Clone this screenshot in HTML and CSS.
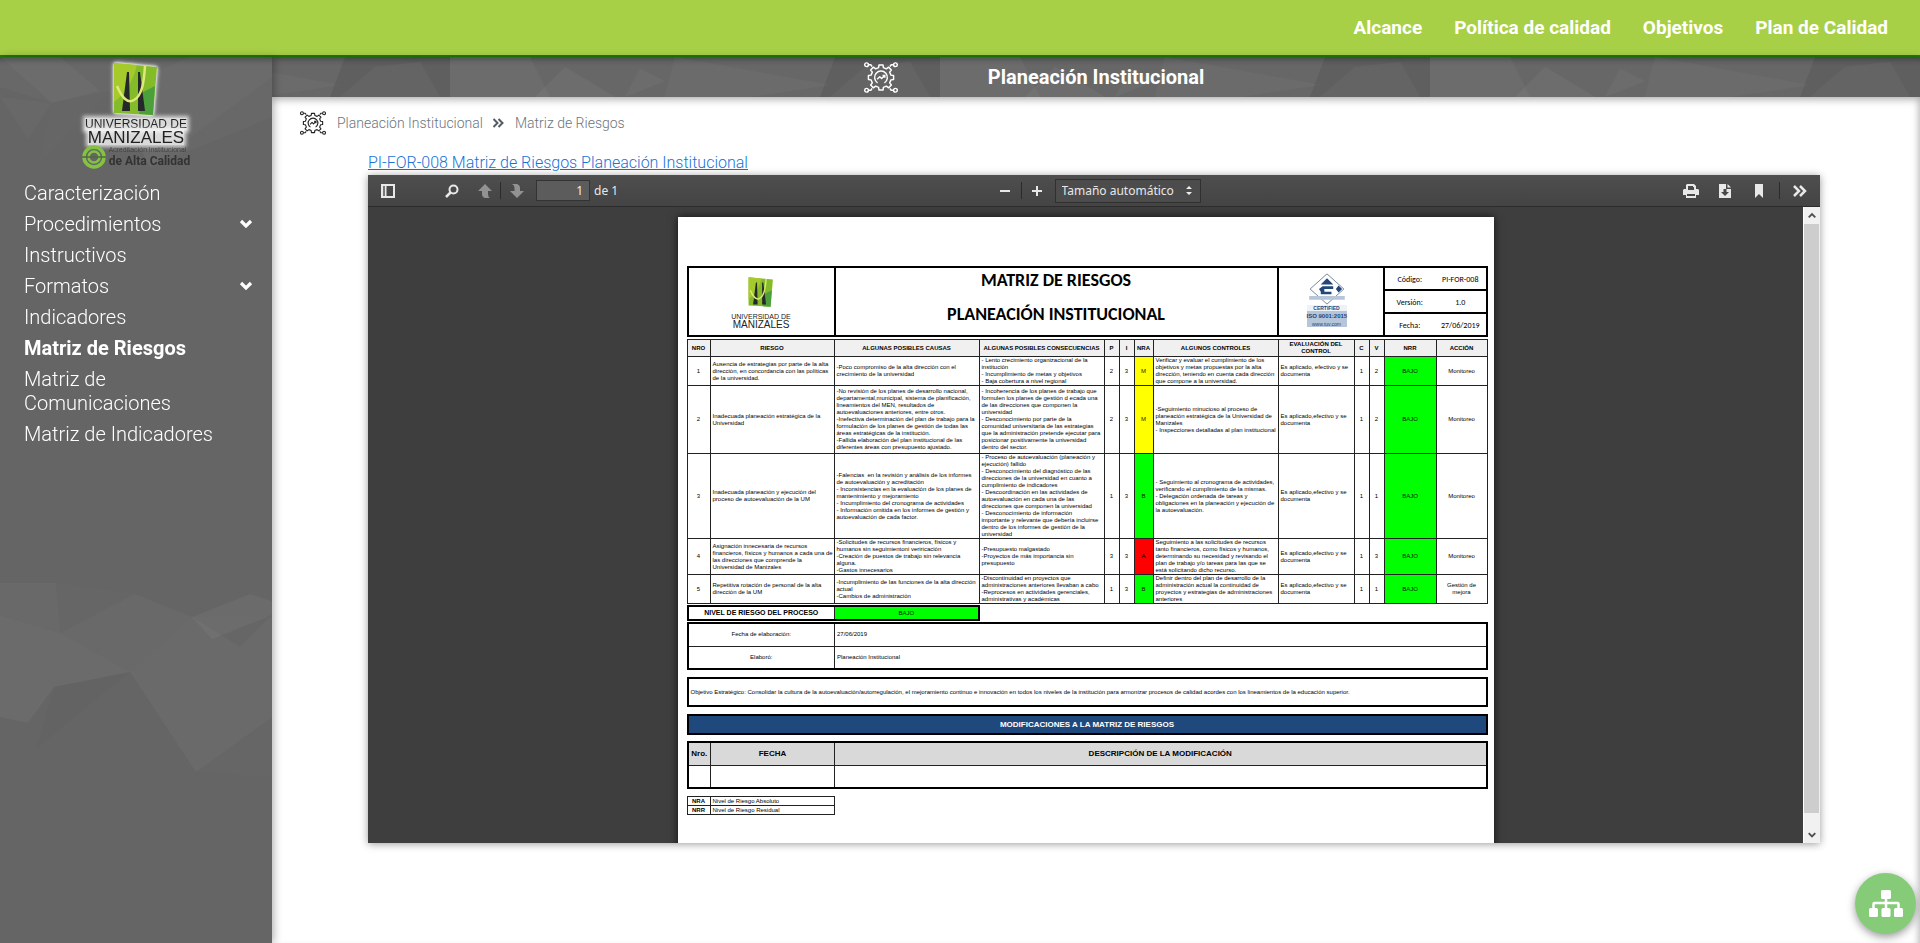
FILE: index.html
```html
<!DOCTYPE html>
<html lang="es">
<head>
<meta charset="utf-8">
<title>Matriz de Riesgos - Planeación Institucional</title>
<link rel="stylesheet" href="styles.css">
</head>
<body>
<svg class="defs" aria-hidden="true">
  <symbol id="gear" viewBox="0 0 40 36">
    <g transform="translate(20 18)" fill="none" stroke="currentColor" stroke-width="1.7" stroke-linejoin="round">
      <path d="M11.700-2.800 14.800-2.400 14.800 2.400 11.700 2.800 10.200 6.300 12.200 8.900 8.900 12.200 6.300 10.200 2.800 11.700 2.400 14.800-2.400 14.800-2.800 11.700-6.300 10.200-8.900 12.200-12.200 8.900-10.200 6.300-11.700 2.800-14.800 2.400-14.800-2.400-11.700-2.800-10.200-6.300-12.200-8.900-8.900-12.200-6.300-10.200-2.800-11.700-2.400-14.800 2.400-14.800 2.800-11.700 6.300-10.200 8.900-12.200 12.200-8.900 10.200-6.300Z"/>
      <path d="M-4 6.300A7.500 7.500 0 1 1 4 6.300M-4.500 2-1.500-1 .8 1.300 4.500-2.500M1.800-2.500H4.500V.2"/>
      <circle cx="-17" cy="-15" r="2.200"/><circle cx="17" cy="-15" r="2.200"/>
      <circle cx="-17" cy="15" r="2.200"/><circle cx="17" cy="15" r="2.200"/>
      <path d="M-14.800-15H-12L-10.500-13M14.800-15H12L10.500-13M-14.800 15H-12L-10.500 13M14.800 15H12L10.500 13"/>
    </g>
  </symbol>
  <symbol id="chevron" viewBox="0 0 14 10"><path d="M2 2 7 7 12 2" fill="none" stroke="currentColor" stroke-width="3.200"/></symbol>
  <symbol id="tower" viewBox="0 0 46 54">
    <path d="M1 1 44 5 40 53 1 51Z" fill="#84bb28"/>
    <path d="M1 1 24 3C20 20 12 32 1 40Z" fill="#a6c92c"/>
    <path d="M30 30 42 24 40 53 26 52Z" fill="#4ba03c"/>
    <path d="M14 10H16L17 49H9Z" fill="#25282a"/>
    <path d="M25 10H27L32 49H25Z" fill="#25282a"/>
    <path d="M4 24C9 36 15 42 21 38 29 34 31 20 32 4" fill="none" stroke="#dfe978" stroke-width="2.500"/>
  </symbol>
</svg>

<header class="topbar">
  <nav class="topnav">
    <a href="#alcance">Alcance</a>
    <a href="#politica">Política de calidad</a>
    <a href="#objetivos">Objetivos</a>
    <a href="#plan">Plan de Calidad</a>
  </nav>
</header>

<div class="layout">
  <aside class="sidebar">
    <svg class="facets" viewBox="0 0 272 886" preserveAspectRatio="xMidYMin slice" aria-hidden="true">
      <g opacity=".75">
        <g fill="#fff">
        <path d="M0 0H272V60L150 110 110 34 52 46Z" opacity=".035"/>
        <path d="M0 0H60L100 34 52 46 0 30Z" opacity=".03"/>
        <path d="M0 40 52 46 28 82Z" opacity=".035"/>
        <path d="M52 46 110 34 38 108Z" opacity=".02"/>
        <path d="M110 34 190 0H272V20L150 110Z" opacity=".025"/>
        <path d="M0 526H56L60 576 0 558Z" opacity=".04"/>
        <path d="M0 558 60 576 130 615 54 630 28 666 0 660Z" opacity=".055"/>
        <path d="M60 576 135 537 192 560 130 615Z" opacity=".045"/>
        <path d="M60 576 56 526 135 537Z" opacity=".02"/>
        <path d="M130 615 192 560 240 590 272 558V660L196 715Z" opacity=".035"/>
        <path d="M192 560 250 537 272 544V558L212 582Z" opacity=".055"/>
        <path d="M130 615 196 715 272 720V560L192 560Z" opacity=".02"/>
        </g>
        <path d="M130 615 36 692 54 630Z" opacity=".02"/>
      </g>
    </svg>
    <div class="brand">
      <svg class="brand-mark"><use href="#tower"/></svg>
      <span class="brand-top">UNIVERSIDAD DE</span>
      <span class="brand-name">MANIZALES</span>
      <div class="seal">
        <svg class="seal-icon" viewBox="0 0 24 24"><g fill="none" stroke="#84c341"><circle cx="12" cy="12" r="10" stroke-width="3.500"/><circle cx="12" cy="12" r="5.500" stroke-width="2.500"/><path d="M0 12H24" stroke="#4f6b3c" stroke-width="1.500"/></g></svg>
        <div class="seal-text"><span>Acreditación Institucional</span><b>de Alta Calidad</b></div>
      </div>
    </div>
    <nav class="menu">
      <a href="#caracterizacion">Caracterización</a>
      <a href="#procedimientos">Procedimientos<svg class="chev"><use href="#chevron"/></svg></a>
      <a href="#instructivos">Instructivos</a>
      <a href="#formatos">Formatos<svg class="chev"><use href="#chevron"/></svg></a>
      <a href="#indicadores">Indicadores</a>
      <a class="active" href="#riesgos">Matriz de Riesgos</a>
      <a href="#comunicaciones">Matriz de<br>Comunicaciones</a>
      <a href="#matriz-indicadores">Matriz de Indicadores</a>
    </nav>
  </aside>

  <main class="main">
    <div class="titlebar">
      <svg class="poly" aria-hidden="true">
        <defs><pattern id="facet" x="178" width="490" height="40" patternUnits="userSpaceOnUse">
          <g fill="#fff"><path d="M0 0H490V40H0Z" opacity=".04"/><path d="M0 0H80L100 40H0Z" opacity=".03"/><path d="M115 10 165 40H85Z" opacity=".04"/><path d="M190 12 215 24 175 40Z" opacity=".03"/><path d="M225 0 380 28 300 40H215Z" opacity=".025"/></g>
          <path d="M385 0H490V40H370Z" opacity=".08"/><path d="M415 10 460 5 480 40H380Z" fill="#fff" opacity=".03"/>
        </pattern></defs>
        <rect width="100%" height="40" fill="url(#facet)"/>
      </svg>
      <svg class="title-icon"><use href="#gear"/></svg>
      <h1>Planeación Institucional</h1>
    </div>
    <div class="crumbs">
      <svg class="crumb-icon"><use href="#gear"/></svg>
      <a href="#inicio">Planeación Institucional</a>
      <svg class="crumb-sep" viewBox="0 0 12 10"><path d="M1.500 1 5.500 5 1.500 9M6.500 1 10.500 5 6.500 9" fill="none" stroke="currentColor" stroke-width="2"/></svg>
      <span>Matriz de Riesgos</span>
    </div>
    <section class="content">
      <a class="doc-link" href="#pi-for-008">PI-FOR-008 Matriz de Riesgos Planeación Institucional</a>
      <div class="viewer">
        <div class="toolbar">
          <div class="tools">
            <button class="tool" aria-label="Panel lateral"><svg viewBox="0 0 16 16"><path fill-rule="evenodd" d="M1 1H15V15H1ZM6.500 3V13H13V3Z"/><path d="M3 3H5V13H3Z" fill="#777"/></svg></button>
            <button class="tool find" aria-label="Buscar"><svg viewBox="0 0 16 16"><g fill="none" stroke="currentColor"><circle cx="9.500" cy="6.500" r="4" stroke-width="2"/><path d="M6.500 9.500 2 14" stroke-width="2.500"/></g></svg></button>
            <button class="tool dim" aria-label="Página anterior"><svg viewBox="0 0 16 16"><path d="M8 1 15 8H11V11Q11 14 13 15H8Q5 14 5 11V8H1Z"/></svg></button>
            <i class="rule"></i>
            <button class="tool dim" aria-label="Página siguiente"><svg viewBox="0 0 16 16"><path d="M8 15 1 8H5.500V5Q5.500 2 3 1H8Q11 2 11 5V8H15Z"/></svg></button>
            <input class="page-no" type="text" value="1" aria-label="Página">
            <span>de 1</span>
          </div>
          <div class="tools">
            <button class="tool" aria-label="Reducir"><svg viewBox="0 0 16 16"><path d="M3 7H13V9H3Z"/></svg></button>
            <i class="rule"></i>
            <button class="tool plus" aria-label="Aumentar"><svg viewBox="0 0 16 16"><path d="M3 7H7V3H9V7H13V9H9V13H7V9H3Z"/></svg></button>
            <span class="zoom"><select aria-label="Tamaño"><option>Tamaño automático</option></select><svg viewBox="0 0 8 10"><path d="M4 0 7 3H1ZM4 9 1 6H7Z"/></svg></span>
          </div>
          <div class="tools right">
            <button class="tool" aria-label="Imprimir"><svg viewBox="0 0 16 16"><path fill-rule="evenodd" d="M3 6V2L4 1H11L13 3V6H15L16 7V12H13V15H3V12H0V7L1 6ZM5 3V7H11V4H10V3ZM4 11V13H12V11Z"/></svg></button>
            <button class="tool" aria-label="Descargar"><svg viewBox="0 0 16 16"><path fill-rule="evenodd" d="M2 1H9V6H14V15H2ZM6.500 6V9H4L8 13 12 9H9.500V6Z"/><path d="M10.500 1 14 4.500H10.500Z"/></svg></button>
            <button class="tool" aria-label="Marcador"><svg viewBox="0 0 16 16"><path d="M4 1H12V15L8 11 4 15Z"/></svg></button>
            <i class="rule"></i>
            <button class="tool" aria-label="Herramientas"><svg viewBox="0 0 16 16"><path d="M2 3 7 8 2 13M8 3 13 8 8 13" fill="none" stroke="currentColor" stroke-width="2.500"/></svg></button>
          </div>
        </div>
        <div class="viewport">
          <div class="pages">
            <article class="sheet">
              <table class="doc-head">
                <colgroup><col class="w147"><col><col class="w106"><col class="w103"></colgroup>
                <tr>
                  <td rowspan="3"><div class="doc-logo"><svg><use href="#tower"/></svg><span>UNIVERSIDAD DE</span><b>MANIZALES</b></div></td>
                  <td rowspan="3" class="doc-title"><div><span>MATRIZ DE RIESGOS</span><span>PLANEACIÓN INSTITUCIONAL</span></div></td>
                  <td rowspan="3"><div class="iso">
                    <svg viewBox="0 0 40 36"><path d="M20 1 39 18 20 35 1 18Z" fill="#fff" stroke="#657996"/><path d="M20 6 27 13H13Z" fill="#234678"/><path d="M33 14 37 18 33 22 30 18ZM11 18 15 15H27V18H17V21H25V24H13V21Z" fill="#234678"/><path d="M0 26H40V30H0Z" fill="#b5c5da"/></svg>
                    <span class="iso-cert">CERTIFIED</span><b>ISO 9001:2015</b><span class="iso-small">www.tuv.com</span></div></td>
                  <td class="meta"><div><span>Código:</span><span>PI-FOR-008</span></div></td>
                </tr>
                <tr><td class="meta"><div><span>Versión:</span><span>1.0</span></div></td></tr>
                <tr><td class="meta"><div><span>Fecha:</span><span>27/06/2019</span></div></td></tr>
              </table>

              <table class="risks">
                <colgroup><col class="w23"><col class="w124"><col class="w145"><col class="w125"><col class="w15"><col class="w15"><col class="w19"><col class="w125"><col class="w76"><col class="w15"><col class="w15"><col class="w52"><col></colgroup>
                <thead><tr><th>NRO</th><th>RIESGO</th><th>ALGUNAS POSIBLES CAUSAS</th><th>ALGUNAS POSIBLES CONSECUENCIAS</th><th>P</th><th>I</th><th>NRA</th><th>ALGUNOS CONTROLES</th><th>EVALUACIÓN DEL<br>CONTROL</th><th>C</th><th>V</th><th>NRR</th><th>ACCIÓN</th></tr></thead>
                <tbody>
                <tr><td>1</td><td class="l">Ausencia de estrategias por parte de la alta<br>dirección, en concordancia con las políticas<br>de la universidad.</td><td class="l">-Poco compromiso de la alta dirección con el<br>crecimiento de la universidad</td><td class="l">- Lento crecimiento organizacional de la<br>institución<br>- Incumplimiento de metas y objetivos<br>- Baja cobertura a nivel regional</td><td>2</td><td>3</td><td class="yellow">M</td><td class="l">Verificar y evaluar el cumplimiento de los<br>objetivos y metas propuestas por la alta<br>dirección, teniendo en cuenta cada dirección<br>que compone a la universidad.</td><td class="l">Es aplicado, efectivo y se<br>documenta</td><td>1</td><td>2</td><td class="green">BAJO</td><td>Monitoreo</td></tr>
                <tr class="tall"><td>2</td><td class="l">Inadecuada planeación estratégica de la<br>Universidad</td><td class="l">-No revisión de los planes de desarrollo nacional,<br>departamental,municipal, sistema de planificación,<br>lineamientos del MEN, resultados de<br>autoevaluaciones anteriores, entre otros.<br>-Inefectiva determinación del plan de trabajo para la<br>formulación de los planes de gestión de todas las<br>áreas estratégicas de la institución.<br>-Fallida elaboración del plan institucional de las<br>diferentes áreas con presupuesto ajustado.</td><td class="l">- Incoherencia de los planes de trabajo que<br>formulen los planes de gestión d ecada una<br>de las direcciones que componen la<br>universidad<br>- Desconocimiento por parte de la<br>comunidad universitaria de las estrategias<br>que la administración pretende ejecutar para<br>posicionar positivamente la universidad<br>dentro del sector.</td><td>2</td><td>3</td><td class="yellow">M</td><td class="l">-Seguimiento minucioso al proceso de<br>planeación estratégica de la Universidad de<br>Manizales<br>- Inspecciones detalladas al plan institucional</td><td class="l">Es aplicado,efectivo y se<br>documenta</td><td>1</td><td>2</td><td class="green">BAJO</td><td>Monitoreo</td></tr>
                <tr><td>3</td><td class="l">Inadecuada planeación y ejecución del<br>proceso de autoevaluación de la UM</td><td class="l">-Falencias &nbsp;en la revisión y análisis de los informes<br>de autoevaluación y acreditación<br>- Inconsistencias en la evaluación de los planes de<br>mantenimiento y mejoramiento<br>- Incumplimiento del cronograma de actividades<br>- Información omitida en los informes de gestión y<br>autoevaluación de cada factor.</td><td class="l">- Proceso de autoevaluación (planeación y<br>ejecución) fallido<br>- Desconocimiento del diagnóstico de las<br>direcciones de la universidad en cuanto a<br>cumplimiento de indicadores<br>- Descoordinación en las actividades de<br>autoevaluación en cada una de las<br>direcciones que componen la universidad<br>- Desconocimiento de información<br>importante y relevante que debería incluirse<br>dentro de los informes de gestión de la<br>universidad</td><td>1</td><td>3</td><td class="green">B</td><td class="l">- Seguimiento al cronograma de actividades,<br>verificando el cumplimiento de la mismas.<br>- Delegación ordenada de tareas y<br>obligaciones en la planeación y ejecución de<br>la autoevaluación.</td><td class="l">Es aplicado,efectivo y se<br>documenta</td><td>1</td><td>1</td><td class="green">BAJO</td><td>Monitoreo</td></tr>
                <tr><td>4</td><td class="l">Asignación innecesaria de recursos<br>financieros, físicos y humanos a cada una de<br>las direcciones que comprende la<br>Universidad de Manizales</td><td class="l">-Solicitudes de recursos financieros, físicos y<br>humanos sin seguimientoni veriricación<br>-Creación de puestos de trabajo sin relevancia<br>alguna.<br>-Gastos innecesarios</td><td class="l">-Presupuesto malgastado<br>-Proyectos de más importancia sin<br>presupuesto</td><td>3</td><td>3</td><td class="red">A</td><td class="l">Seguimiento a las solicitudes de recursos<br>tanto financieros, como físicos y humanos,<br>determinando su necesidad y revisando el<br>plan de trabajo y/o tareas para las que se<br>está solicitando dicho recurso.</td><td class="l">Es aplicado,efectivo y se<br>documenta</td><td>1</td><td>3</td><td class="green">BAJO</td><td>Monitoreo</td></tr>
                <tr><td>5</td><td class="l">Repetitiva rotación de personal de la alta<br>dirección de la UM</td><td class="l">-Incumplimiento de las funciones de la alta dirección<br>actual<br>-Cambios de administración</td><td class="l">-Discontinuidad en proyectos que<br>administraciones anteriores llevaban a cabo<br>-Reprocesos en actividades gerenciales,<br>administrativas y académicas</td><td>1</td><td>3</td><td class="green">B</td><td class="l">Definir dentro del plan de desarrollo de la<br>administración actual la continuidad de<br>proyectos y estrategias de administraciones<br>anteriores</td><td class="l">Es aplicado,efectivo y se<br>documenta</td><td>1</td><td>1</td><td class="green">BAJO</td><td>Gestión de<br>mejora</td></tr>
                </tbody>
              </table>

              <table class="level"><colgroup><col class="w147"><col></colgroup><tr><th>NIVEL DE RIESGO DEL PROCESO</th><td class="green">BAJO</td></tr></table>
              <table class="made"><colgroup><col class="w147"><col></colgroup><tr><td>Fecha de elaboración:</td><td class="l">27/06/2019</td></tr><tr><td>Elaboró:</td><td class="l">Planeación Institucional</td></tr></table>
              <p class="goal">Objetivo Estratégico: Consolidar la cultura de la autoevaluación/autorregulación, el mejoramiento continuo e innovación en todos los niveles de la institución para armonizar procesos de calidad acordes con los lineamientos de la educación superior.</p>
              <h2 class="mods-title">MODIFICACIONES A LA MATRIZ DE RIESGOS</h2>
              <table class="mods"><colgroup><col class="w23"><col class="w124"><col></colgroup><tr><th>Nro.</th><th>FECHA</th><th>DESCRIPCIÓN DE LA MODIFICACIÓN</th></tr><tr><td></td><td></td><td></td></tr></table>
              <table class="legend"><colgroup><col class="w23"><col></colgroup><tr><th>NRA</th><td class="l">Nivel de Riesgo Absoluto</td></tr><tr><th>NRR</th><td class="l">Nivel de Riesgo Residual</td></tr></table>
            </article>
          </div>
          <div class="scroll" aria-hidden="true">
            <svg viewBox="0 0 17 17"><path d="M5 10.500 8.500 7 12 10.500" fill="none" stroke="#505050" stroke-width="2"/></svg>
            <div class="thumb"></div>
            <svg viewBox="0 0 17 17"><path d="M5 7 8.500 10.500 12 7" fill="none" stroke="#505050" stroke-width="2"/></svg>
          </div>
        </div>
      </div>
    </section>
  </main>
</div>
<button class="fab" aria-label="Mapa de procesos"><svg viewBox="0 0 34 28"><g fill="#fff"><rect x="12" y="0" width="10" height="9" rx="1.500"/><rect x="0" y="18" width="9" height="9" rx="1.500"/><rect x="12.500" y="18" width="9" height="9" rx="1.500"/><rect x="25" y="18" width="9" height="9" rx="1.500"/></g><path d="M17 9V18M4.500 18V14Q4.500 13 5.500 13H28.500Q29.500 13 29.500 14V18" fill="none" stroke="#fff" stroke-width="2.500"/></svg></button>
</body>
</html>
```
FILE: styles.css
```css
* { box-sizing: border-box; }
body { margin: 0; min-height: 100vh; display: flex; flex-direction: column; font-family: Roboto, "Liberation Sans", sans-serif; font-weight: 300; background: #fff; }
a { color: inherit; text-decoration: none; }
button { border: 0; padding: 0; background: none; color: inherit; }
.defs { position: absolute; width: 0; height: 0; }

.topbar { height: 57px; background: #a8d046; border-bottom: 2px solid #1c7c0c; display: flex; align-items: center; justify-content: flex-end; padding: 0 32px; }
.topnav { display: flex; gap: 32px; color: #fff; font-size: 19px; font-weight: 700; }

.layout { flex: 1; display: flex; }
.sidebar { position: relative; z-index: 1; width: 272px; flex: none; background: #656565; color: #fff; box-shadow: inset 0 10px 6px -8px rgba(0,0,0,.4), 2px 0 8px rgba(0,0,0,.3); }
.facets { position: absolute; left: 0; top: 0; width: 100%; height: 100%; }
.brand { position: relative; display: flex; flex-direction: column; align-items: center; padding-top: 5px; }
.brand-mark { width: 46px; height: 54px; filter: drop-shadow(0 0 1px #fff) drop-shadow(0 0 2px #fff); }
.brand-top, .brand-name { font-family: "Liberation Sans", sans-serif; font-weight: 400; color: #222; background: rgba(255,255,255,.75); box-shadow: 0 0 4px 2px rgba(255,255,255,.75); }
.brand-top { font-size: 12px; line-height: 12px; margin-top: 2px; }
.brand-name { font-size: 17px; line-height: 15px; }
.seal { display: flex; align-items: center; gap: 3px; }
.seal-icon { width: 24px; height: 24px; }
.seal-text { display: flex; flex-direction: column; color: #333; }
.seal-text span { font-size: 7px; line-height: 8px; }
.seal-text b { font-size: 12px; line-height: 14px; font-weight: 700; }
.menu { position: relative; display: flex; flex-direction: column; gap: 7px; padding: 12px 19px 0 24px; font-size: 20px; line-height: 24px; }
.menu a { display: flex; justify-content: space-between; align-items: center; }
.menu .active { font-weight: 700; }
.chev { width: 14px; height: 10px; }

.main { flex: 1; min-width: 0; display: flex; flex-direction: column; box-shadow: inset -6px 0 6px -4px rgba(0,0,0,.25); }
.titlebar { position: relative; height: 40px; display: grid; grid-template-columns: 1fr auto 1fr; align-items: center; background: #616161; color: #fff; box-shadow: inset 0 10px 6px -8px rgba(0,0,0,.4), 0 2px 8px rgba(0,0,0,.35); }
.poly { position: absolute; width: 100%; height: 40px; }
.title-icon { position: relative; width: 34px; height: 31px; justify-self: end; margin-right: 90px; }
h1 { position: relative; margin: 0; font-size: 20px; line-height: 24px; font-weight: 700; }
.crumbs { display: flex; align-items: center; padding: 0 28px; height: 52px; font-size: 14px; line-height: 20px; color: #6c757d; }
.crumb-icon { width: 26px; height: 24px; color: #222; margin-right: 11px; }
.crumb-sep { width: 12px; height: 10px; margin: 0 11px 0 9px; color: #555c63; }
.content { flex: 1; display: flex; flex-direction: column; align-items: stretch; padding: 2px 100px 100px 96px; }
.doc-link { align-self: flex-start; font-size: 16px; line-height: 24px; color: #1673d8; text-decoration: underline; }

.viewer { flex: 1; display: flex; flex-direction: column; box-shadow: 0 1px 8px rgba(0,0,0,.4); }
.toolbar { height: 32px; flex: none; display: grid; grid-template-columns: 1fr auto 1fr; align-items: center; padding: 0 3px 0 4px; background: linear-gradient(#4e4e4e, #444); border-bottom: 1px solid #2c2c2c; color: #e8e8e8; font: 12px "Noto Sans", sans-serif; }
.tools { display: flex; align-items: center; }
.right { justify-content: flex-end; }
.tool { width: 34px; height: 24px; display: flex; align-items: center; justify-content: center; fill: currentColor; }
.tool svg { width: 16px; height: 16px; }
.find { margin-left: 31px; }
.tool.dim { color: #929292; width: 31px; }
.tool.plus { width: 30px; margin-right: 3px; }
.rule { width: 1px; height: 17px; background: #2b2b2b; }
.right .rule { margin: 0 3px; }
.page-no { width: 54px; height: 21px; margin: 0 4px; padding: 0 6px; text-align: right; color: #eee; background: #5c5c5c; border: 1px solid #333; font: inherit; }
.tools:not(.right) .tool:first-child { width: 32px; }
.zoom { display: flex; align-items: center; width: 146px; height: 24px; padding-right: 7px; border: 1px solid #303030; background: #4c4c4c; fill: #eee; }
.zoom select { flex: 1; min-width: 0; appearance: none; border: 0; background: transparent; color: inherit; font: inherit; padding: 0 6px; }
.zoom svg { width: 8px; height: 10px; flex: none; }
.viewport { flex: 1; display: flex; background: #3e3e3e; }
.pages { flex: 1; height: 636px; overflow: hidden; padding-top: 10px; }
.scroll { width: 17px; display: flex; flex-direction: column; background: #f1f1f1; border-left: 1px solid #fff; }
.scroll svg { height: 17px; flex: none; }
.thumb { flex: 1; background: #cdcdcd; margin: 0 1px 13px 0; }

.sheet { width: 816px; height: 640px; margin: 0 auto; padding: 49px 6px 0 9px; background: #fff; color: #000; box-shadow: 0 0 8px rgba(0,0,0,.7); font: 400 6px/7px "Liberation Sans", sans-serif; white-space: nowrap; }
.sheet table { width: 100%; table-layout: fixed; border-collapse: collapse; border: 2px solid #000; }
.sheet td, .sheet th { padding: 0; border: 1px solid #222; text-align: center; vertical-align: middle; }
.sheet td.l { text-align: left; padding-left: 2px; }
.w147 { width: 147px; } .w106 { width: 106px; } .w103 { width: 103px; } .w23 { width: 23px; } .w124 { width: 124px; }
.w145 { width: 145px; } .w125 { width: 125px; } .w15 { width: 15px; } .w19 { width: 19px; } .w76 { width: 76px; } .w52 { width: 52px; }
.doc-head tr { height: 23px; }
.sheet .doc-head td { border: 2px solid #000; }
.sheet .doc-head .doc-title { font: 700 18px/24px Carlito, Lato, sans-serif; vertical-align: top; }
.doc-title div { display: flex; flex-direction: column; gap: 10px; }
.doc-logo { display: flex; flex-direction: column; align-items: center; font-size: 7px; line-height: 7px; color: #222; }
.doc-logo svg { width: 26px; height: 34px; margin-bottom: 4px; }
.doc-logo b { font-size: 10px; line-height: 9px; font-weight: 400; }
.iso { width: 40px; margin: 0 auto; display: flex; flex-direction: column; background: #b5c5da; color: #234678; font-size: 5px; line-height: 6px; }
.sheet .doc-head td:nth-child(3) { padding: 0 8px 4px 0; }
.iso svg { width: 40px; height: 32px; background: #fff; }
.iso-cert { background: #eef2f7; font-weight: 700; }
.iso b { font-size: 6px; line-height: 10px; }
.sheet .meta { font: 8px/10px Carlito, Lato, sans-serif; }
.meta div { display: grid; grid-template-columns: 1fr 1fr; }
.sheet .risks { margin-top: 2px; border: 1px solid #000; }
.risks th { height: 17px; background: #f0f0f0; }
.tall { height: 68px; }
.sheet .yellow { background: #ff0; color: #221e00; }
.sheet .green { background: #0f0; color: #020; }
.sheet .red { background: #f00; color: #000; }
.sheet .level { width: 293px; margin-top: 1px; }
.level tr { height: 14px; }
.level th { font-size: 7px; line-height: 8px; }
.made { margin-top: 1px; }
.made tr { height: 23px; }
.goal { margin: 7px 0 0; height: 30px; padding: 0 2px; border: 2px solid #000; display: flex; align-items: center; }
.mods-title { margin: 7px 0 0; height: 21px; border: 2px solid #000; background: #1f497d; color: #fff; font-size: 8px; line-height: 17px; text-align: center; }
.mods { margin-top: 6px; }
.mods tr { height: 23px; }
.mods th { background: #d9d9d9; font-size: 8px; }
.sheet .legend { width: 148px; margin-top: 7px; border-width: 1px; }
.legend tr { height: 9px; }

.fab { position: fixed; right: 4px; bottom: 9px; width: 61px; height: 61px; border-radius: 50%; background: #86cc78; display: flex; align-items: center; justify-content: center; box-shadow: 0 3px 8px rgba(0,0,0,.4); z-index: 2; }
.fab svg { width: 34px; height: 28px; }
```
